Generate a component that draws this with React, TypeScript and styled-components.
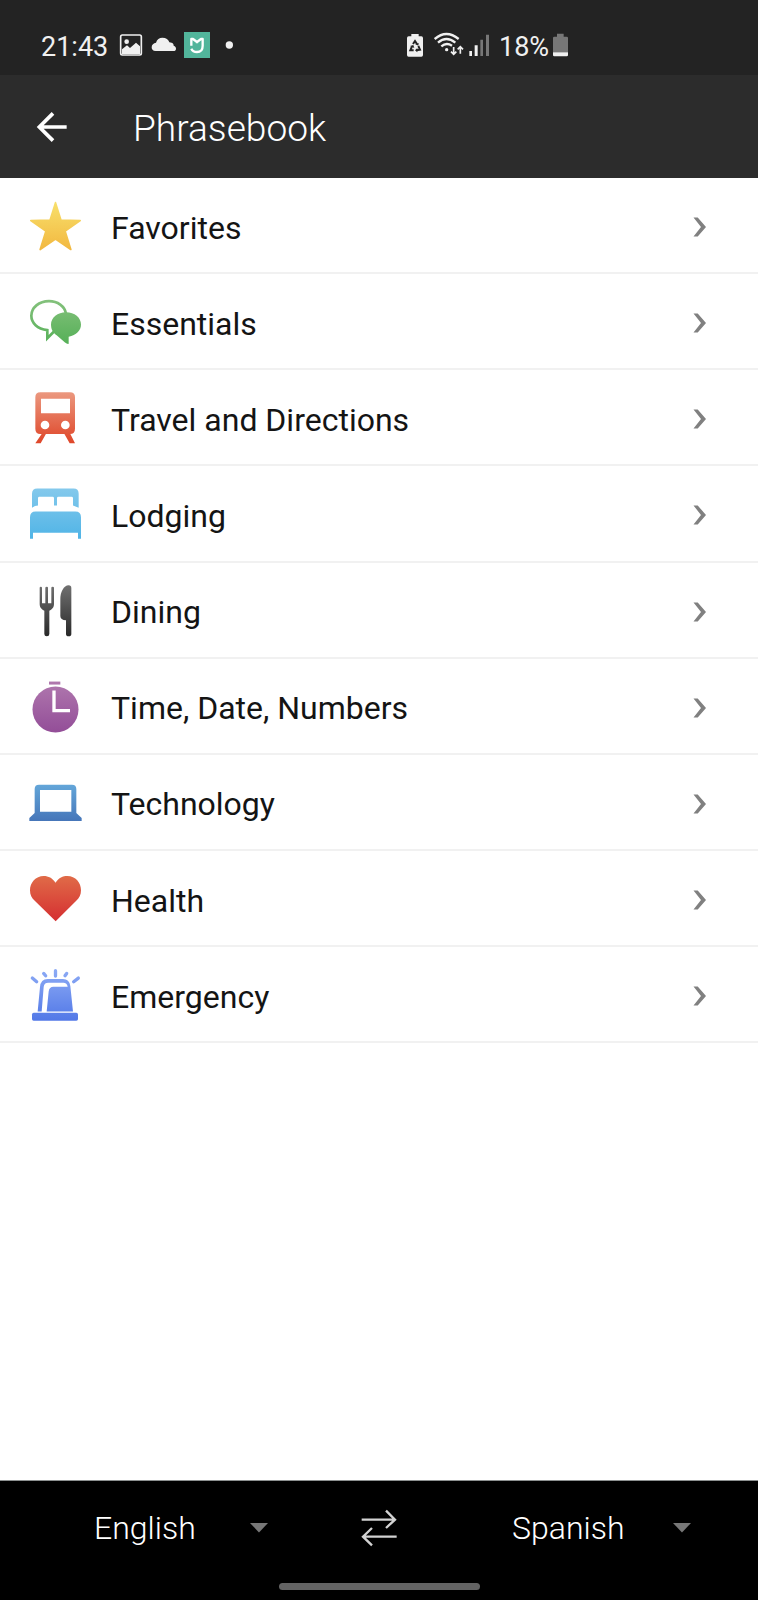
import React from "react";
import styled, { createGlobalStyle } from "styled-components";

const GlobalStyle = createGlobalStyle`
  * { box-sizing: border-box; }
  body { margin: 0; background: #fff; font-family: Roboto, "Liberation Sans", sans-serif; }
`;

const Screen = styled.div`
  display: flex;
  flex-direction: column;
  width: 758px;
  height: 1600px;
  background: #fff;
  overflow: hidden;
`;

const StatusBar = styled.header`
  display: flex;
  flex: none;
  height: 75px;
  background: #232323;
  color: #f0f0f0;
`;

const StatusText = styled.span<{ $start: number; $width: number }>`
  flex: none;
  width: ${(p) => p.$width}px;
  padding-left: ${(p) => p.$start}px;
  padding-top: 1px;
  font-size: 27px;
  line-height: 92px;
  height: 75px;
  white-space: nowrap;
`;

const StatusGlyph = styled.svg<{ $gap?: number }>`
  flex: none;
  display: block;
  margin-left: ${(p) => p.$gap ?? 0}px;
`;

const AppBar = styled.div`
  display: flex;
  flex: none;
  align-items: center;
  height: 103px;
  padding-left: 36px;
  background: #2c2c2c;
  color: #fff;
`;

const BackButton = styled.button`
  display: block;
  width: 32px;
  height: 32px;
  padding: 0;
  border: 0;
  background: none;
  svg { display: block; }
`;

const Title = styled.h1`
  margin: 4px 0 0 65px;
  font-size: 37.1px;
  font-weight: 300;
  line-height: 44px;
`;

const List = styled.ul`
  flex: 1;
  margin: 0;
  padding: 0;
  list-style: none;
`;

const Row = styled.li`
  display: flex;
  align-items: center;
  height: 96.15px;
  padding: 1px 51.5px 0 25px;
  border-bottom: 2px solid #f1f1f1;
`;

const RowIcon = styled.svg`
  flex: none;
  width: 60px;
  height: 60px;
  margin-top: 1px;
`;

const RowLabel = styled.span`
  flex: 1;
  margin: 4px 0 0 26px;
  font-size: 32px;
  line-height: 40px;
  color: #141414;
`;

const Chevron = styled.svg`
  flex: none;
  width: 14px;
  height: 20px;
  margin-top: 3px;
`;

const LanguageBar = styled.footer`
  flex: none;
  height: 120px;
  border-top: 1px solid #8c9090;
  background: #000;
`;

const LanguageRow = styled.div`
  display: grid;
  grid-template-columns: 94px 156px 110px 152px 161px 1fr;
  align-items: center;
  height: 94px;
  svg { display: block; margin-top: -1px; }
`;

const Language = styled.span`
  font-size: 32px;
  font-weight: 300;
  line-height: 40px;
  color: #fff;
`;

const HomeHandle = styled.div`
  width: 201px;
  height: 7px;
  margin: 8px auto 0;
  border-radius: 4px;
  background: #636363;
`;

type Art = {
  label: string;
  view: string;
  from: string;
  to: string;
  y1: number;
  y2: number;
  art: (paint: string) => React.ReactNode;
};

const phrases: Art[] = [
  {
    label: "Favorites", view: "75 48 180 180", from: "#f8e06c", to: "#f2b840", y1: 65, y2: 211,
    art: (c) => (
      <path fill={c} stroke={c} strokeWidth="5" strokeLinejoin="round" d="M166.500 68L183 120.500L240.500 121.500L195.500 153.500L212.500 208.500L166.500 177L120.500 208.500L137.500 153.500L92.500 121.500L150 120.500Z" />
    ),
  },
  {
    label: "Essentials", view: "75 336.500 180 180", from: "#84c17c", to: "#56b058", y1: 360, y2: 492,
    art: (c) => (
      <>
        <path fill="none" stroke={c} strokeWidth="8" d="M198 401C194 379 173 364 147 364C117 364 94 383 94 408C94 430 112 447 142 451V475L165 452" />
        <path fill={c} d="M198 397C224 397 243 413 243 434C243 452 229 466 206 471V492Q201 493 195 488L170 466C158 459 153 447 153 434C153 413 173 397 198 397Z" />
      </>
    ),
  },
  {
    label: "Travel and Directions", view: "75 55 180 180", from: "#eb987f", to: "#df4629", y1: 68, y2: 221,
    art: (c) => (
      <>
        <path fill={c} fillRule="evenodd" d="M121 68H210Q225 68 225 83V177Q225 193 210 193H121Q106 193 106 177V83Q106 68 121 68ZM123 87V131H210V87ZM122 166a13 13 0 1 0 26 0a13 13 0 1 0-26 0M183 166a13 13 0 1 0 26 0a13 13 0 1 0-26 0" />
        <path fill={c} d="M121 191H139L122 221H106L125 193ZM192 191H210L225 221H209Z" />
      </>
    ),
  },
  {
    label: "Lodging", view: "75 343.400 180 180", from: "#84c9ec", to: "#50b4e6", y1: 357, y2: 508,
    art: (c) => (
      <>
        <path fill={c} d="M96 415V373Q96 357 112 357H221Q236 357 236 373V415L219 408V386Q219 382 215 382H175Q171 382 171 386V408H162V386Q162 382 158 382H118Q114 382 114 386V408Q105 408 96 415Z" />
        <path fill={c} d="M90 508V443Q90 426 107 426H226Q243 426 243 443V508H234V490H99V508Z" />
      </>
    ),
  },
  {
    label: "Dining", view: "75 61.900 180 180", from: "#707070", to: "#292929", y1: 75, y2: 228,
    art: (c) => (
      <>
        <path fill={c} d="M119 82Q119 79 122.500 79Q126 79 126 82V129H136V82Q136 79 140.500 79Q144 79 144 82V129H154V82Q154 79 158 79Q162 79 162 82V131C162 142 155 148 148 151V221Q148 228 140.500 228Q133 228 133 221V151C126 148 119 142 119 131Z" />
        <path fill={c} d="M206 75Q214 75 214 83V221Q214 228 206 228Q198 228 198 221V180Q181 179 181 167V117C181 96 191 75 206 75Z" />
      </>
    ),
  },
  {
    label: "Time, Date, Numbers", view: "75 350.300 180 180", from: "#b078ae", to: "#934e98", y1: 364, y2: 516,
    art: (c) => (
      <>
        <path fill={c} d="M147 364H181V373H147Z" />
        <circle cx="166.500" cy="447.500" r="69" fill={c} />
        <path fill="none" stroke="#fff" strokeWidth="10" d="M162 391V451H210" />
      </>
    ),
  },
  {
    label: "Technology", view: "75 68.800 180 180", from: "#63a6d9", to: "#4676b9", y1: 104, y2: 213,
    art: (c) => (
      <path fill={c} fillRule="evenodd" d="M117 104H216Q229 104 229 117V189L245 204V213H88V204L104 189V117Q104 104 117 104ZM120 120V185H214V120Z" />
    ),
  },
  {
    label: "Health", view: "75 357 180 180", from: "#e06b48", to: "#d52f31", y1: 378, y2: 513,
    art: (c) => (
      <path fill={c} d="M166.500 398C177 383 188 378 202 378C227 378 243 398 243 421C243 435 238 444 228 453L167 514L105 453C95 444 90 435 90 421C90 398 107 378 131 378C146 378 157 384 166.500 398Z" />
    ),
  },
  {
    label: "Emergency", view: "75 75.700 180 180", from: "#8dabf5", to: "#5278e7", y1: 88, y2: 243,
    art: (c) => (
      <>
        <path stroke={c} strokeWidth="10" strokeLinecap="round" d="M166.500 93V109M131 101L137 108M200 101L195 108M97 115L110 126M235 115L221 126" />
        <path fill={c} d="M113 215L120 142Q122 118 143 118H189Q208 118 211 139L219 215H140L146 155Q148 141 160 141H203Q201 129 190 129H145Q132 129 131 142L125 215Z" />
        <rect x="96" y="219" width="138" height="24" rx="5" fill={c} />
      </>
    ),
  },
];

function PhraseRow({ item, index }: { item: Art; index: number }) {
  const id = `tint-${index}`;
  return (
    <Row>
      <RowIcon viewBox={item.view}>
        <defs>
          <linearGradient id={id} gradientUnits="userSpaceOnUse" x1="0" x2="0" y1={item.y1} y2={item.y2}>
            <stop stopColor={item.from} />
            <stop offset="1" stopColor={item.to} />
          </linearGradient>
        </defs>
        {item.art(`url(#${id})`)}
      </RowIcon>
      <RowLabel>{item.label}</RowLabel>
      <Chevron viewBox="0 0 14 20">
        <path fill="#808080" d="M.5 .5H4.700L13 10L4.700 19.500H.5L8 10Z" />
      </Chevron>
    </Row>
  );
}

const DropArrow = () => (
  <svg width="18" height="10" viewBox="0 0 18 10"><path fill="#777" d="M0 0H18L9 9.500Z" /></svg>
);

export default function App() {
  return (
    <Screen>
      <GlobalStyle />
      <StatusBar>
        <StatusText $start={41} $width={118}>21:43</StatusText>
        <StatusGlyph width="26" height="75" viewBox="294 -30 78 225">
          <rect x="302" y="75" width="62" height="60" rx="5" fill="none" stroke="#f0f0f0" strokeWidth="5" />
          <circle cx="320" cy="95" r="7" fill="#f0f0f0" />
          <path fill="#f0f0f0" d="M306 118L321 106L330 114L348 98L360 109V132H306Z" />
        </StatusGlyph>
        <StatusGlyph $gap={6} width="28" height="75" viewBox="390 -30 84 225">
          <path fill="#f0f0f0" d="M407 123C398 123 395 118 395 112C395 104 401 99 408 98C411 88 418 83 427 83C438 83 446 88 448 97C459 98 461 102 461 107C466 109 468 112 468 116C468 120 465 123 461 123Z" />
        </StatusGlyph>
        <StatusGlyph $gap={6} width="26" height="75" viewBox="492 -30 78 225">
          <rect x="492" y="66" width="78" height="78" fill="#52b59b" />
          <path fill="none" stroke="#fff" strokeWidth="7" strokeLinejoin="round" d="M514 107V87H519L531 96L543 87H548V107C548 120 541 126 531 126C522 126 517 123 514 116M531 95V100" />
        </StatusGlyph>
        <StatusGlyph $gap={14} width="12" height="75" viewBox="612 -30 36 225">
          <circle cx="628" cy="105" r="11" fill="#f0f0f0" />
        </StatusGlyph>
        <StatusGlyph $gap={170} width="18" height="75" viewBox="48 -30 54 225">
          <path fill="#f0f0f0" d="M64 72H86V79H94Q99 79 99 84V135Q99 140 94 140H56Q51 140 51 135V84Q51 79 56 79H64Z" />
          <path fill="none" stroke="#232323" strokeWidth="6" d="M69 102L75 93L81 102M85 108L90 119L79 121M71 121H61L66 109" />
          <path fill="#232323" d="M75 102L86 99L85 107ZM82 114V127L75 121ZM60 108L70 105L73 114Z" />
        </StatusGlyph>
        <StatusGlyph $gap={10} width="30" height="75" viewBox="132 -30 90 225">
          <g fill="none" stroke="#f0f0f0" strokeWidth="7">
            <path d="M134 87Q169 57 206 87M144 98Q169 76 196 98M154 109Q169 96 186 107" />
            <path strokeWidth="5" d="M191 111V132M183 125L191 133L199 125M211 131V112M203 118L211 110L219 118" />
          </g>
          <circle cx="170" cy="119" r="5" fill="#f0f0f0" />
        </StatusGlyph>
        <StatusGlyph $gap={4} width="22" height="75" viewBox="234 -30 66 225">
          <path fill="#f0f0f0" d="M238 123H246V138H238ZM254 106H263V138H254Z" />
          <path fill="#777" d="M271 89H279V138H271ZM288 74H297V138H288Z" />
        </StatusGlyph>
        <StatusText $start={9} $width={62}>18%</StatusText>
        <StatusGlyph width="17" height="75" viewBox="486 -30 51 225">
          <path fill="#777" d="M501 71H521V80H530Q534 80 534 84V127H489V84Q489 80 493 80H501Z" />
          <path fill="#f0f0f0" d="M489 127H534V135Q534 139 530 139H493Q489 139 489 135Z" />
        </StatusGlyph>
      </StatusBar>
      <AppBar>
        <BackButton aria-label="Back">
          <svg width="32" height="32" viewBox="108 122 96 96">
            <path fill="none" stroke="#fff" strokeWidth="11" d="M200 170H118M159 129L118 170L159 211" />
          </svg>
        </BackButton>
        <Title>Phrasebook</Title>
      </AppBar>
      <List>
        {phrases.map((item, i) => <PhraseRow key={item.label} item={item} index={i} />)}
      </List>
      <LanguageBar>
        <LanguageRow>
          <span />
          <Language>English</Language>
          <DropArrow />
          <svg width="38" height="38" viewBox="900 114 114 114">
            <path fill="none" stroke="#d2d2d2" strokeWidth="7" d="M905 146H1004M978 119L1005 146L978 171M1010 197H910M936 171L909 197L936 223" />
          </svg>
          <Language>Spanish</Language>
          <DropArrow />
        </LanguageRow>
        <HomeHandle />
      </LanguageBar>
    </Screen>
  );
}
